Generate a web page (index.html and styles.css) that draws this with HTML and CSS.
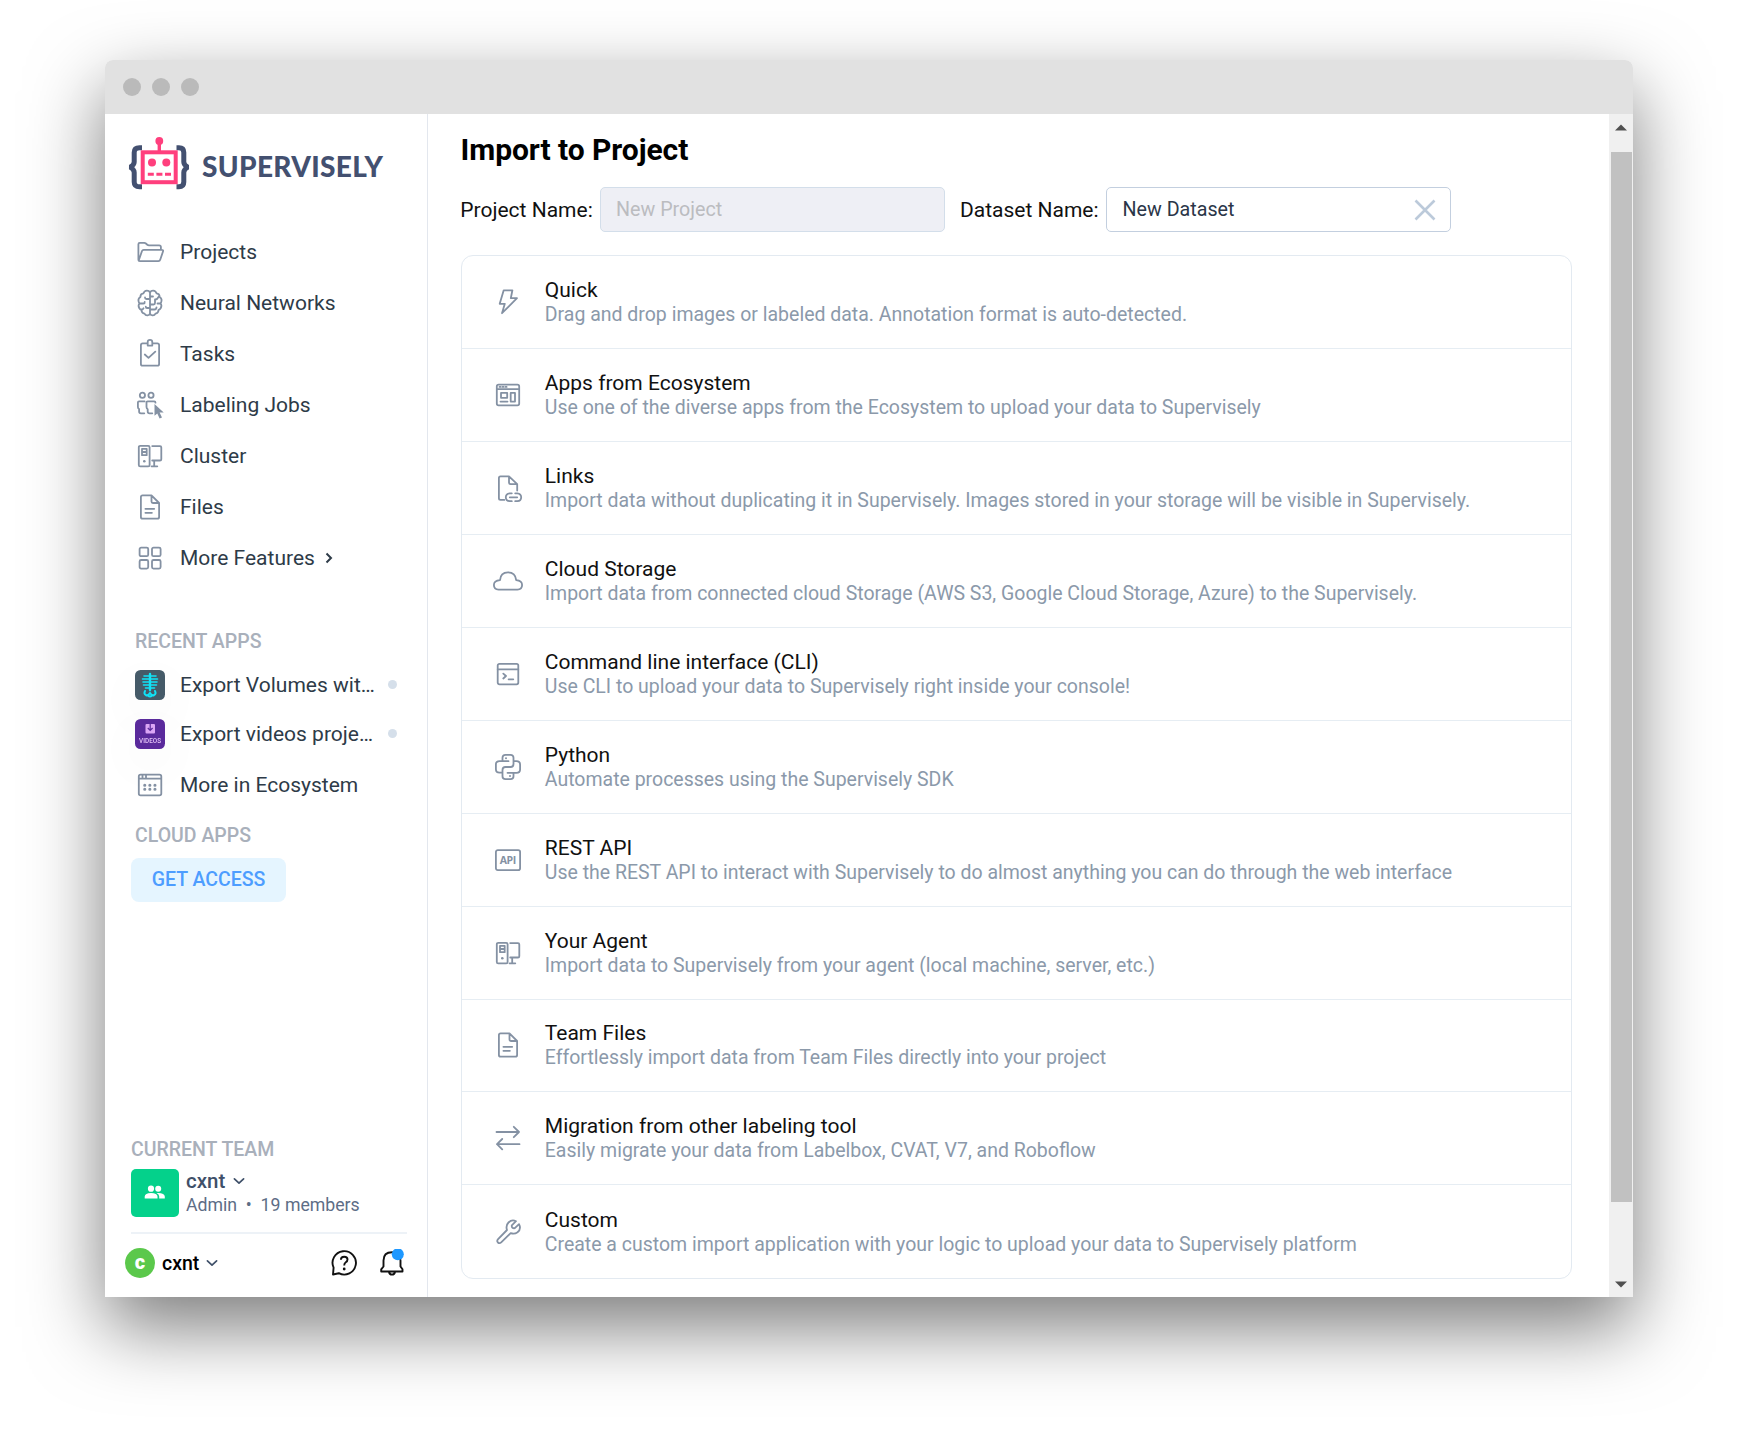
FILE: index.html
```html
<!DOCTYPE html>
<html lang="en">
<head>
<meta charset="utf-8">
<title>Import to Project</title>
<link rel="stylesheet" href="styles.css">
</head>
<body>
<svg class="defs" aria-hidden="true">
  <symbol id="i-file" viewBox="0 0 30 30"><path d="M16.5 3.4H7.6Q5.9 3.4 5.9 5.1V25Q5.9 26.7 7.6 26.7H22.4Q24.1 26.7 24.1 25V11ZM16.5 3.4V9.6Q16.5 11 17.9 11H24.1M10.4 16.8H19.2M10.4 20.8H16.9"/></symbol>
  <symbol id="i-cluster" viewBox="0 0 30 30"><rect x="3.8" y="4.8" width="10.8" height="20.6" rx="1.4"/><path d="M7 7.8H11.7V14.2H7ZM7 11H11.7M17.2 5.1H25Q26.3 5.1 26.3 6.4V18.2Q26.3 19.5 25 19.5H17.2M19.2 19.5V25.1M16.5 25.3H22.3"/><circle class="dot" cx="9.3" cy="20.3" r="1.3"/></symbol>
  <symbol id="i-chev" viewBox="0 0 12 8"><path d="M1.4 1.8 6 6.2 10.6 1.8"/></symbol>
</svg>
<div class="window">
  <header class="titlebar"><i></i><i></i><i></i></header>
  <div class="body">
    <aside class="sidebar">
      <svg class="logo" viewBox="0 0 262 56">
        <g fill="none" stroke="#435070" stroke-width="5" stroke-linejoin="bevel">
          <path d="M15 11.800H12.500Q7.200 11.800 7.200 16.500V26Q7.200 29 3.200 31.200Q7.200 33.500 7.200 36.500V46Q7.200 50.800 12.500 50.800H15"/>
          <path d="M49.500 11.800H52Q56.800 11.800 56.800 16.500V26Q56.800 29 60.800 31.200Q56.800 33.500 56.800 36.500V46Q56.800 50.800 52 50.800H49.500"/>
        </g>
        <rect x="15.700" y="16.300" width="33" height="29.900" fill="#fff" stroke="#ff3f7d" stroke-width="4"/>
        <path d="M32.300 5V15" stroke="#ff3f7d" stroke-width="3.400"/>
        <g fill="#ff3f7d"><circle cx="32.300" cy="5" r="3.900"/><circle cx="25" cy="26.500" r="4"/><circle cx="39.300" cy="26.500" r="4"/></g>
        <path d="M20.800 38.300H44" stroke="#ff3f7d" stroke-width="3" stroke-dasharray="6 2.600"/>
        <text class="wordmark" x="75" y="40.600" textLength="181" lengthAdjust="spacing">SUPERVISELY</text>
      </svg>
      <nav class="nav">
        <a><svg class="ic" viewBox="0 0 30 30"><path d="M5 24.200Q3.400 24.200 3.400 22.600V7.200Q3.400 5.900 4.700 5.900H9.300Q10.200 5.900 10.900 6.500L12.300 7.700Q13 8.300 14 8.300H24.200Q25.900 8.300 25.900 10V12.600M3.700 23.500 7 14Q7.400 12.800 8.700 12.800H26.700Q28.600 12.800 28 14.500L25.200 22.800Q24.800 24.200 23.300 24.200H5"/></svg>Projects</a>
        <a><svg class="ic" viewBox="0 0 30 30"><path d="M15 4.500V25.500M15 4.500Q14 2.500 11.800 2.600Q9.300 2.700 8.500 5.300Q5.300 5.500 5.400 9Q3 10.500 3.500 13Q3.700 14.500 4.600 15.300Q2.800 17.500 4.200 20Q5 21.400 6.400 21.800Q6.500 25.200 9.500 25.600Q10.500 27.600 12.500 27.400Q14.500 27.200 15 25.500Q15.500 27.200 17.500 27.400Q19.500 27.600 20.500 25.600Q23.500 25.200 23.600 21.800Q25 21.400 25.800 20Q27.200 17.500 25.400 15.300Q26.300 14.500 26.500 13Q27 10.500 24.600 9Q24.700 5.500 21.500 5.300Q20.700 2.700 18.200 2.600Q16 2.500 15 4.500M15 11H11.500Q10 11 10 9.500M9.500 15.300H7.800M15 20H12Q10.800 20 10.800 18.700M5 15.500H8.500Q9.700 15.500 9.700 14M6.500 21.500Q8 21.500 8.500 20.300M15 16.500H18.500Q20 16.500 20 15V11.500M15 21.500H19.500Q21.500 21.500 21.500 19.300M15 8.500H18M23.500 9Q22.200 11.500 20.500 11.500M25 15.500H22.500"/></svg>Neural Networks</a>
        <a><svg class="ic" viewBox="0 0 30 30"><path d="M12.700 4.400H7.700Q5.900 4.400 5.900 6.200V24.900Q5.900 26.700 7.700 26.700H22.300Q24.100 26.700 24.100 24.900V6.200Q24.100 4.400 22.300 4.400H17.300M12.700 6.600V3.200Q12.700.900 15 .900Q17.300.900 17.300 3.200V6.600ZM9.800 15.500 13.500 18.800 20.300 12.600"/></svg>Tasks</a>
        <a><svg class="ic" viewBox="0 0 30 30"><circle cx="7.400" cy="5.300" r="2.600"/><circle cx="16" cy="5.300" r="2.600"/><path d="M9.600 11.400H4Q2.900 11.400 2.900 12.500V17Q2.900 18.500 4.100 19V21.500Q4.100 23.300 6 23.300H9.300M20.500 12.700Q20.500 11.400 19.200 11.400H12.700Q11.500 11.400 11.500 12.600V17Q11.500 18.500 12.700 19.200V21.500Q12.700 23.300 14.600 23.300H17.300"/><path class="solid" d="M19.500 14V25.800L22.300 23.500 24.600 28.600 27 27.500 24.600 22.500H28.700Z"/></svg>Labeling Jobs</a>
        <a><svg class="ic"><use href="#i-cluster"/></svg>Cluster</a>
        <a><svg class="ic"><use href="#i-file"/></svg>Files</a>
        <a><svg class="ic" viewBox="0 0 30 30"><rect x="4.600" y="4.600" width="8.600" height="8.600" rx="1.500"/><rect x="17" y="4.600" width="8.600" height="8.600" rx="1.500"/><rect x="4.600" y="17" width="8.600" height="8.600" rx="1.500"/><rect x="17" y="17" width="8.600" height="8.600" rx="1.500"/></svg>More Features<svg class="more" viewBox="0 0 8 12"><path d="M1.500 1.500 6 6 1.500 10.500"/></svg></a>
      </nav>
      <h2 class="label recent">RECENT APPS</h2>
      <div class="apps">
        <a><svg class="app" viewBox="0 0 30 30"><rect width="30" height="30" rx="5.500" fill="#455a68"/><g stroke="#10e3f7" fill="none" stroke-width="1.600" stroke-linecap="round"><path d="M15 4V20" stroke-width="2.400"/><path d="M9 6H21M7.500 9H22.500M8 12H22M8.500 15H21.500M10.500 18H19.500"/><path d="M10 21Q8.500 24 11 25.200Q13 26 15 23Q17 26 19 25.200Q21.500 24 20 21M13 25.500Q15 27.500 17 25.500" stroke-width="2"/></g></svg><span class="name">Export Volumes wit…</span><i></i></a>
        <a><svg class="app" viewBox="0 0 30 30"><rect width="30" height="30" rx="5.500" fill="#5a2a9c"/><rect x="10.500" y="5" width="9.500" height="9.500" rx="1" fill="#dba6f5"/><path d="M15.200 3V11M12.800 9 15.200 11.500 17.600 9" stroke="#5a2a9c" stroke-width="1.200" fill="none"/><text x="15" y="23.800" text-anchor="middle" textLength="22" class="videos">VIDEOS</text></svg><span class="name">Export videos proje…</span><i></i></a>
        <a class="eco"><svg class="ic" viewBox="0 0 30 30"><rect x="3.800" y="4.700" width="22.500" height="20.700" rx="1.800"/><path d="M4 8.600H26M7.500 5V8M11 5V8"/><path class="grid" d="M9.700 15.200H22M9.700 19.300H22"/></svg>More in Ecosystem</a>
      </div>
      <h2 class="label cloud">CLOUD APPS</h2>
      <button class="access">GET ACCESS</button>
      <div class="bottom">
        <h2 class="label team-label">CURRENT TEAM</h2>
        <div class="team">
          <svg class="avatar" viewBox="0 0 48 48"><rect width="48" height="48" rx="5" fill="#04d18b"/><g fill="#fff"><circle cx="20" cy="19.700" r="3.100"/><circle cx="27.200" cy="19.700" r="3"/><path d="M13.700 29.500V27.500Q14 23.900 20 23.900Q26.300 23.900 26.500 27.500V29.500ZM25.500 24Q33.500 23.500 33.800 27.500V29.500H28.200V27.500Q28.200 25.300 25.500 24Z"/></g></svg>
          <div class="who"><b>cxnt <svg class="chev"><use href="#i-chev"/></svg></b><span>Admin &nbsp;•&nbsp; 19 members</span></div>
        </div>
        <div class="user">
          <span class="initial">c</span><b>cxnt</b><svg class="chev"><use href="#i-chev"/></svg>
          <svg class="tool help" viewBox="0 0 28 28"><path d="M3 25.500 3.600 18.700A11.700 11.700 0 1 1 8.800 24.200ZM10.900 10.700Q10.900 7.700 14.200 7.700Q17.500 7.700 17.500 10.500Q17.500 12.200 15.800 13.300Q14.200 14.400 14.200 16.500"/><circle class="dot" cx="14.200" cy="20" r="1.400"/></svg>
          <svg class="tool bell" viewBox="0 0 28 28"><path d="M3.200 22.500V20.300L5.500 17.500V11.500Q5.500 3.200 14 3.200Q22.500 3.200 22.500 11.500V17.500L24.500 20.300V22.500ZM11 23Q11.500 25.600 14 25.600Q16.500 25.600 17 23"/><circle cx="19.800" cy="5.300" r="6" class="badge"/></svg>
        </div>
      </div>
    </aside>
    <main class="main">
      <h1>Import to Project</h1>
      <div class="form">
        <label>Project Name:</label><div class="input disabled"><span>New Project</span></div>
        <label class="second">Dataset Name:</label><div class="input"><span>New Dataset</span><svg class="clear" viewBox="0 0 24 24"><path d="M2.500 2.500 21.500 21.500M21.500 2.500 2.500 21.500"/></svg></div>
      </div>
      <ul class="list">
        <li><svg class="ic" viewBox="0 0 30 30"><path d="M10.700 3.300H19.400L17.800 11.200H24L9 26.200 11.800 16.800H6.700Z"/></svg><div><b>Quick</b><p>Drag and drop images or labeled data. Annotation format is auto-detected.</p></div></li>
        <li><svg class="ic" viewBox="0 0 30 30"><rect x="3.800" y="4.700" width="22.400" height="20.600" rx="1.800"/><path d="M4 9.100H26M6.500 6.900H7.600M9.500 6.900H10.600M12.500 6.900H13.600M8 12.900H14.200V17.800H8ZM7.500 21.600H14.500M17.700 12.900H22V21.600H17.700Z"/></svg><div><b>Apps from Ecosystem</b><p>Use one of the diverse apps from the Ecosystem to upload your data to Supervisely</p></div></li>
        <li><svg class="ic" viewBox="0 0 30 30"><path d="M11.300 26.900H7.500Q5.900 26.900 5.900 25.300V4.900Q5.900 3.300 7.500 3.300H16L24.200 11.200V17.500M16 3.300V9.600Q16 11.200 17.600 11.200H24.200M18.800 20.300H16.700Q12.800 20.600 12.800 24.300Q12.800 28 16.700 28.200H18.800M22.200 20.300H24.300Q28.200 20.600 28.200 24.300Q28.200 28 24.300 28.200H22.200M16.800 24.300H24.200"/></svg><div><b>Links</b><p>Import data without duplicating it in Supervisely. Images stored in your storage will be visible in Supervisely.</p></div></li>
        <li><svg class="ic" viewBox="0 0 30 30"><path d="M5.600 23.600Q.900 23.300.900 19Q.900 14.700 7 14.200Q7.500 6.300 15 6.300Q22.500 6.300 23.200 14.200Q29.100 14.700 29.100 19Q29.100 23.300 24.400 23.600Z"/></svg><div><b>Cloud Storage</b><p>Import data from connected cloud Storage (AWS S3, Google Cloud Storage, Azure) to the Supervisely.</p></div></li>
        <li><svg class="ic" viewBox="0 0 30 30"><rect x="4.700" y="4.800" width="20.600" height="20.500" rx="1.700"/><path d="M4.700 10.300H25.300M10.300 14.600 13 17 10.300 19.500M15.600 20.300H20.300"/></svg><div><b>Command line interface (CLI)</b><p>Use CLI to upload your data to Supervisely right inside your console!</p></div></li>
        <li><svg class="ic" viewBox="0 0 30 30"><path d="M15.500 9.200H6.500Q2.900 9.200 2.900 12.500V17.300Q2.900 20.700 6.500 20.700H9.500V18Q9.500 15 12.500 15H17.500Q20.500 15 20.500 12V5.800Q20.500 2.900 17.500 2.900H12.500Q9.500 2.900 9.500 5.800V9.200M20.500 9.200H23.500Q27.100 9.200 27.100 12.700V17.500Q27.100 20.800 23.500 20.800H14.500M20.500 20.800V24.200Q20.500 27.100 17.500 27.100H12.500Q9.500 27.100 9.500 24.200V20.700"/><circle class="dot" cx="13" cy="6.300" r="1"/><circle class="dot" cx="17" cy="23.900" r="1"/></svg><div><b>Python</b><p>Automate processes using the Supervisely SDK</p></div></li>
        <li><svg class="ic" viewBox="0 0 30 30"><rect x="2.900" y="5.200" width="24.200" height="19.900" rx="1.900"/><text class="api" x="15" y="18.900" text-anchor="middle" textLength="16.500">API</text></svg><div><b>REST API</b><p>Use the REST API to interact with Supervisely to do almost anything you can do through the web interface</p></div></li>
        <li><svg class="ic"><use href="#i-cluster"/></svg><div><b>Your Agent</b><p>Import data to Supervisely from your agent (local machine, server, etc.)</p></div></li>
        <li><svg class="ic"><use href="#i-file"/></svg><div><b>Team Files</b><p>Effortlessly import data from Team Files directly into your project</p></div></li>
        <li><svg class="ic" viewBox="0 0 30 30"><path d="M3.500 9H26M20.800 3.800 26 9 20.800 14.200M26.500 21.200H4M9.200 16 4 21.200 9.200 26.400"/></svg><div><b>Migration from other labeling tool</b><p>Easily migrate your data from Labelbox, CVAT, V7, and Roboflow</p></div></li>
        <li><svg class="ic" viewBox="0 0 30 30"><path d="M23 4.200 18.800 8.300Q18.300 11.500 21.800 11.200L26 7.200Q28.500 12 24.500 15.300Q21.500 17.500 17.700 16.200L8.200 25.300Q6.500 26.900 4.900 25.500Q3.500 23.900 5.100 22.200L14 13Q12.500 8.500 15.500 5.500Q18.800 2.200 23 4.200Z"/></svg><div><b>Custom</b><p>Create a custom import application with your logic to upload your data to Supervisely platform</p></div></li>
      </ul>
    </main>
    <div class="scrollbar"><svg viewBox="0 0 12 7"><path d="M6 .500 12 6.500H0Z"/></svg><div class="thumb"></div><svg class="down" viewBox="0 0 12 7"><path d="M6 6.500 12 .500H0Z"/></svg></div>
  </div>
</div>
</body>
</html>
```
FILE: styles.css
```css
* { box-sizing: border-box; }
body { margin: 0; height: 1447px; overflow: hidden; background: #fff; font-family: Roboto, "Liberation Sans", sans-serif; font-size: 21px; color: #2e3b48; }
h1, h2, p, ul { margin: 0; padding: 0; font-weight: 400; }
.defs { display: none; }
.window { margin: 60px 0 0 105px; width: 1528.400px; height: 1237px; border-radius: 8px 8px 0 0; background: #fff; box-shadow: 0 30px 76px rgba(0, 0, 0, .52); display: flex; flex-direction: column; }
.titlebar { height: 54px; background: #e1e1e1; border-radius: 8px 8px 0 0; display: flex; align-items: center; gap: 11px; padding-left: 18px; }
.titlebar i { width: 18px; height: 18px; border-radius: 50%; background: #bababa; }
.body { flex: 1; display: flex; min-height: 0; }

.ic { width: 30px; height: 30px; flex: none; }
.ic, symbol { fill: none; stroke: #8491a3; stroke-width: 1.8; stroke-linejoin: round; stroke-linecap: round; }
.ic .dot, .ic .solid { fill: #8491a3; stroke: none; }
.dot { fill: #8491a3; stroke: none; }
.grid { stroke-width: 3; stroke-dasharray: .1 5; }
.api { font: 700 10.500px "Open Sans", sans-serif; fill: #8491a3; stroke: none; }

.sidebar { width: 323px; border-right: 1px solid #e3e7ee; display: flex; flex-direction: column; align-items: flex-start; padding: 22px 20px 0 26px; }
.logo { width: 262px; height: 56px; margin-left: -4px; flex: none; }
.wordmark { font: 900 28px Lato, sans-serif; fill: #435070; }
.nav { margin: 34px 0 0 4px; }
.nav a, .apps a { display: flex; align-items: center; gap: 15px; height: 51px; white-space: nowrap; }
.more { width: 8px; height: 12px; margin-left: -5px; fill: none; stroke: #2e3b48; stroke-width: 2; }
.label { font-size: 19.500px; line-height: 24px; font-weight: 500; color: #a9b0bb; white-space: nowrap; }
.recent { margin: 47px 0 6px 4px; }
.apps { margin-left: 4px; }
.apps a { height: 49px; }
.apps a.eco { height: 51px; padding-top: 2px; }
.app { width: 30px; height: 30px; flex: none; filter: drop-shadow(0 15px 20px rgba(0, 0, 0, .03)); }
.videos { font: 500 6.300px Roboto, sans-serif; fill: #e3c2f7; }
.name { width: 198px; }
.apps i { width: 9px; height: 9px; border-radius: 50%; background: #d5dfea; margin-left: -5px; }
.cloud { margin: 14.500px 0 10px 4px; }
.access { width: 155px; height: 44px; border: 0; border-radius: 8px; background: #e5f5ff; color: #4d9dff; font: 500 19.500px Roboto, sans-serif; padding: 0; }
.bottom { margin-top: auto; width: 276px; }
.team-label { margin-bottom: 7px; }
.team { display: flex; height: 65px; border-bottom: 2px solid #edf2f7; }
.avatar { width: 48px; height: 48px; margin-right: 7px; }
.who { line-height: 24px; }
.who b { display: flex; align-items: center; gap: 8px; font-weight: 500; font-size: 20.500px; color: #3f5069; }
.who span { display: block; font-size: 17.700px; line-height: 25px; color: #5d6d86; white-space: nowrap; }
.chev { width: 12px; height: 8px; }
#i-chev { stroke: #3f5069; stroke-width: 1.7; }
.user { display: flex; align-items: center; height: 58px; margin: 0 0 5px -6px; width: 282.500px; color: #000; }
.initial { width: 30px; height: 30px; border-radius: 50%; background: #5bc84b; color: #fff; font-weight: 900; font-size: 20px; line-height: 29px; text-align: center; margin-right: 7px; }
.user b { font-weight: 500; font-size: 19.500px; margin-right: 7px; }
.tool { width: 28px; height: 28px; fill: none; stroke: #111; stroke-width: 1.900; stroke-linejoin: round; }
.tool .dot { fill: #111; stroke: none; }
.tool .badge { fill: #1e98ff; stroke: none; }
.help { margin-left: auto; }
.bell { margin: 0 2px 0 20px; }

.main { flex: 1; padding: 17px 0 0 33px; }
h1 { font-size: 30px; line-height: 38px; font-weight: 700; color: #000; letter-spacing: -.05px; margin-left: -.500px; }
.form { display: flex; align-items: center; height: 45px; margin: 18px 0 23px -.700px; color: #111; white-space: nowrap; }
.form label { width: 139.200px; }
.form label.second { width: 146px; margin-left: 15.500px; }
.input { width: 345px; height: 45px; border: 1px solid #c3cfdf; border-radius: 5px; padding: 0 13px 0 15.500px; display: flex; align-items: center; justify-content: space-between; font-size: 19.700px; color: #2b3648; }
.input span { padding-bottom: 1px; }
.disabled { background: #eeeff5; border-color: #d3deea; color: #bbbcc0; }
.clear { width: 24px; height: 24px; stroke: #bccada; stroke-width: 2.600; fill: none; }
.list { list-style: none; width: 1111px; border: 1px solid #e3eaf1; border-radius: 12px; }
.list li { height: 92.950px; border-bottom: 1px solid #e6edf3; display: flex; align-items: center; gap: 21.800px; padding-left: 31px; line-height: 24px; }
.list li:last-child { border-bottom: 0; }
.list b { display: block; font-weight: 400; color: #111; }
.list p { font-size: 19.490px; line-height: 26px; margin-bottom: -2px; color: #8b99aa; white-space: nowrap; }

.scrollbar { width: 24.400px; background: #f0f0f0; display: flex; flex-direction: column; align-items: center; padding: 10px 0 9px; }
.scrollbar svg { width: 12px; height: 7px; fill: #505050; flex: none; }
.thumb { width: 21px; height: 1050px; margin-top: 21px; background: #c1c1c1; }
.down { margin-top: auto; }
```
